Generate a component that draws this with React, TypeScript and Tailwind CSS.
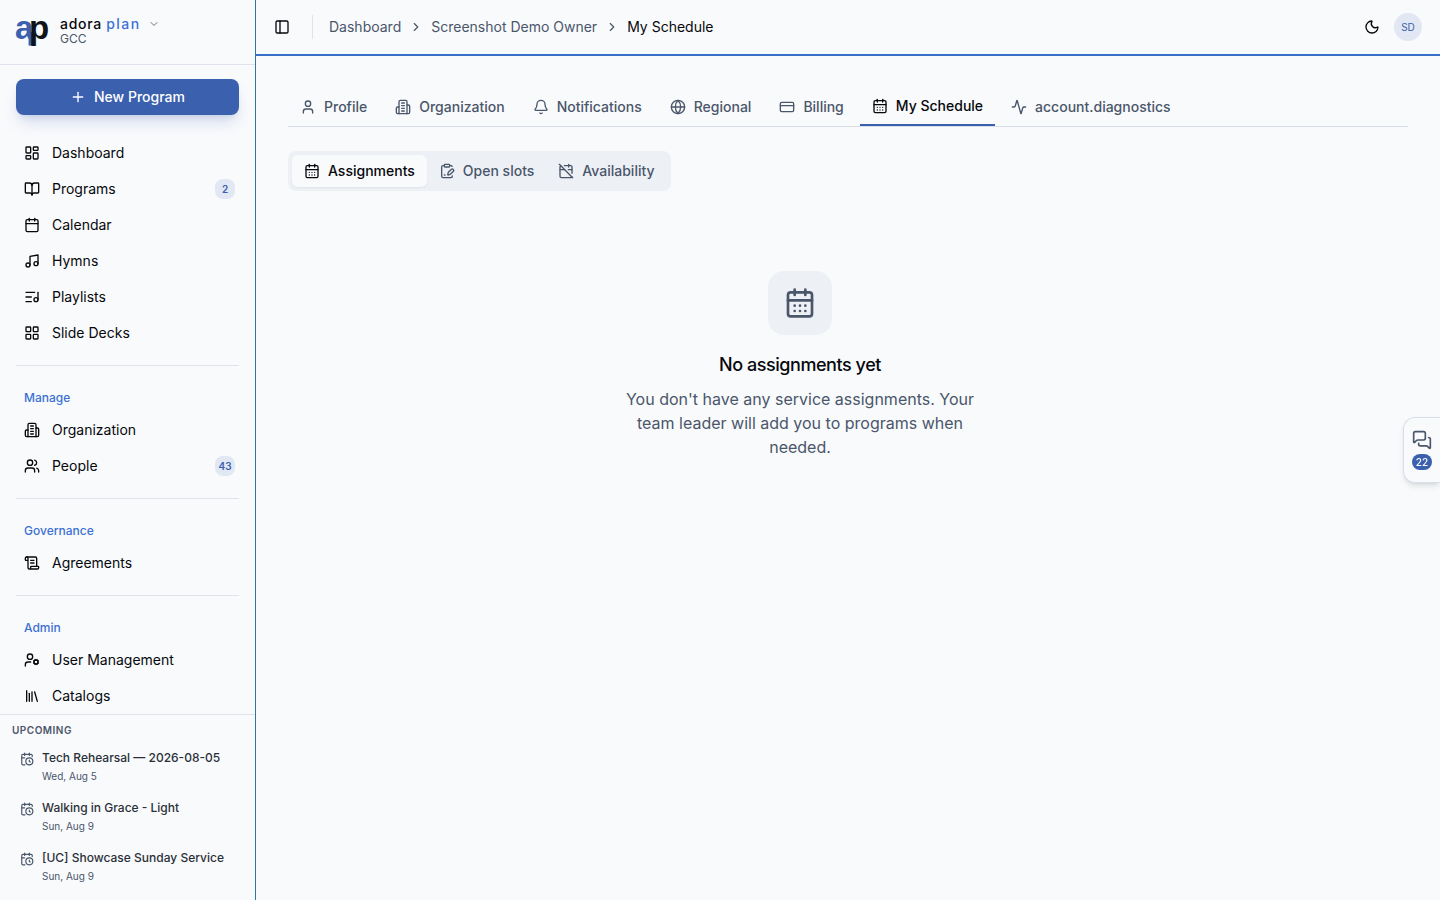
import { useState } from 'react';
import {
  Activity,
  Bell,
  BookOpen,
  Calendar,
  CalendarClock,
  CalendarDays,
  CalendarOff,
  ChevronDown,
  ChevronRight,
  ClipboardPenLine,
  CreditCard,
  Globe,
  LayoutDashboard,
  LayoutGrid,
  Library,
  ListMusic,
  MessagesSquare,
  Moon,
  Music,
  PanelLeft,
  Plus,
  ScrollText,
  User,
  UserCog,
  Users,
} from 'lucide-react';
import type { ComponentType } from 'react';

interface NavItem {
  label: string;
  icon: ComponentType<{ className?: string }>;
  count?: number;
}

interface NavGroup {
  title?: string;
  items: NavItem[];
}

function OfficeIcon({ className }: { className?: string }) {
  return (
    <svg
      className={className}
      viewBox="0 0 24 24"
      fill="none"
      stroke="currentColor"
      strokeWidth="2"
      strokeLinecap="round"
      strokeLinejoin="round"
      aria-hidden="true"
    >
      <path d="M6 22V4a2 2 0 0 1 2-2h8a2 2 0 0 1 2 2v18Z" />
      <path d="M6 12H4a2 2 0 0 0-2 2v6a2 2 0 0 0 2 2h2" />
      <path d="M18 9h2a2 2 0 0 1 2 2v9a2 2 0 0 1-2 2h-2" />
      <path d="M10 6h4" />
      <path d="M10 10h4" />
      <path d="M10 14h4" />
      <path d="M10 18h4" />
    </svg>
  );
}

const navGroups: NavGroup[] = [
  {
    items: [
      { label: 'Dashboard', icon: LayoutDashboard },
      { label: 'Programs', icon: BookOpen, count: 2 },
      { label: 'Calendar', icon: Calendar },
      { label: 'Hymns', icon: Music },
      { label: 'Playlists', icon: ListMusic },
      { label: 'Slide Decks', icon: LayoutGrid },
    ],
  },
  {
    title: 'Manage',
    items: [
      { label: 'Organization', icon: OfficeIcon },
      { label: 'People', icon: Users, count: 43 },
    ],
  },
  {
    title: 'Governance',
    items: [{ label: 'Agreements', icon: ScrollText }],
  },
  {
    title: 'Admin',
    items: [
      { label: 'User Management', icon: UserCog },
      { label: 'Catalogs', icon: Library },
    ],
  },
];

const upcoming = [
  { title: 'Tech Rehearsal — 2026-08-05', date: 'Wed, Aug 5' },
  { title: 'Walking in Grace - Light', date: 'Sun, Aug 9' },
  { title: '[UC] Showcase Sunday Service', date: 'Sun, Aug 9' },
];

const accountTabs: NavItem[] = [
  { label: 'Profile', icon: User },
  { label: 'Organization', icon: OfficeIcon },
  { label: 'Notifications', icon: Bell },
  { label: 'Regional', icon: Globe },
  { label: 'Billing', icon: CreditCard },
  { label: 'My Schedule', icon: CalendarDays },
  { label: 'account.diagnostics', icon: Activity },
];

const scheduleTabs: NavItem[] = [
  { label: 'Assignments', icon: CalendarDays },
  { label: 'Open slots', icon: ClipboardPenLine },
  { label: 'Availability', icon: CalendarOff },
];

function Logo() {
  return (
    <svg
      className="size-8 shrink-0 overflow-visible font-['Liberation_Sans',sans-serif] text-[33px] font-bold"
      viewBox="0 0 32 32"
      role="img"
      aria-label="adora plan"
    >
      <rect x="12.6" y="16" width="4" height="13.6" fill="#3a60ae" />
      <text y="22.6">
        <tspan x="-1" fill="#3a60ae">
          a
        </tspan>
        <tspan x="13" fill="#101418">
          p
        </tspan>
      </text>
    </svg>
  );
}

function Sidebar() {
  return (
    <aside className="flex w-64 shrink-0 flex-col border-r border-[#2b7a9c]">
      <div className="flex h-[65px] shrink-0 items-center border-b border-[#dfe4ec] px-4">
        <button type="button" className="flex items-center gap-3 text-left">
          <Logo />
          <span className="flex flex-col pb-0.5">
            <span className="flex items-center gap-2 text-sm leading-4 font-medium tracking-wider">
              <span>
                adora <span className="tracking-widest text-[#3b70d4]">plan</span>
              </span>
              <ChevronDown className="size-3 text-[#6b7688]" />
            </span>
            <span className="text-xs leading-[14px] text-[#4a566a]">GCC</span>
          </span>
        </button>
      </div>

      <div className="flex min-h-0 flex-1 flex-col overflow-hidden px-4 pt-[14px]">
        <button
          type="button"
          className="mb-5 flex h-9 shrink-0 items-center justify-center gap-2 rounded-lg bg-[#3a60ae] text-sm font-medium text-white shadow-lg shadow-[#3a60ae]/20"
        >
          <Plus className="size-4" />
          New Program
        </button>

        <nav>
          {navGroups.map((group, index) => (
            <section
              key={index}
              className={index > 0 ? 'mt-[14px] border-t border-[#dfe3ea] pt-[14px]' : ''}
            >
              {group.title && (
                <h2 className="flex h-8 items-center px-2 pt-1 text-xs font-medium text-[#3b70d4]">
                  {group.title}
                </h2>
              )}
              <ul>
                {group.items.map((item) => (
                  <li key={item.label}>
                    <a href="#" className="flex h-9 items-center gap-3 pr-1 pl-2 text-sm">
                      <item.icon className="size-4 shrink-0" />
                      <span className="flex-1">{item.label}</span>
                      {item.count && (
                        <span className="flex h-5 min-w-5 items-center justify-center rounded-lg bg-[#e1e8f4] text-[10px] font-semibold text-[#3a60ae]">
                          {item.count}
                        </span>
                      )}
                    </a>
                  </li>
                ))}
              </ul>
            </section>
          ))}
        </nav>
      </div>

      <div className="shrink-0 border-t border-[#dfe3ea] px-3 pt-[7px] pb-1.5">
        <h2 className="text-[10px] leading-4 font-semibold tracking-wider text-[#4a566a]">UPCOMING</h2>
        <ul className="pt-1.5">
          {upcoming.map((event) => (
            <li key={event.title}>
              <a href="#" className="flex h-[50px] gap-2 px-2 pt-1">
                <CalendarClock className="mt-1 size-[14px] shrink-0 text-[#4a566a]" />
                <span className="flex min-w-0 flex-col">
                  <span className="truncate text-xs leading-5 font-medium text-[#2b3038]">{event.title}</span>
                  <span className="text-[10px] leading-4 text-[#4a566a]">{event.date}</span>
                </span>
              </a>
            </li>
          ))}
        </ul>
      </div>
    </aside>
  );
}

function Header() {
  return (
    <header className="flex h-14 shrink-0 items-center border-b-2 border-[#3b70c8] px-[18px]">
      <button type="button" aria-label="Toggle sidebar">
        <PanelLeft className="size-4" />
      </button>
      <div className="mr-4 ml-[22px] h-6 w-px bg-[#dfe3ea]" />
      <nav aria-label="Breadcrumb">
        <ol className="flex items-center gap-2 text-sm text-[#4a566a]">
          <li>
            <a href="#">Dashboard</a>
          </li>
          <li aria-hidden="true">
            <ChevronRight className="size-[14px]" />
          </li>
          <li>
            <a href="#">Screenshot Demo Owner</a>
          </li>
          <li aria-hidden="true">
            <ChevronRight className="size-[14px]" />
          </li>
          <li className="text-[#06080c]">My Schedule</li>
        </ol>
      </nav>
      <div className="ml-auto flex items-center gap-[14px]">
        <button type="button" aria-label="Toggle theme">
          <Moon className="size-4" />
        </button>
        <button
          type="button"
          className="flex size-7 items-center justify-center rounded-full bg-[#e1e8f3] text-[10px] text-[#3a60ae]"
        >
          SD
        </button>
      </div>
    </header>
  );
}

export default function App() {
  const [accountTab, setAccountTab] = useState('My Schedule');
  const [scheduleTab, setScheduleTab] = useState('Assignments');

  return (
    <div className="flex h-screen overflow-hidden bg-[#f9fafc] font-['Inter',sans-serif] text-[#06080c]">
      <Sidebar />

      <div className="flex min-w-0 flex-1 flex-col">
        <Header />

        <main className="flex-1 overflow-auto px-8 pt-8">
          <div className="flex gap-1 border-b border-[#d8dfe9]" role="tablist">
            {accountTabs.map((tab) => (
              <button
                key={tab.label}
                type="button"
                role="tab"
                aria-selected={accountTab === tab.label}
                onClick={() => setAccountTab(tab.label)}
                className={`flex h-[38px] items-center gap-2 px-3 text-sm font-medium ${
                  accountTab === tab.label ? 'border-b-2 border-[#3a60ae]' : 'text-[#4a566a]'
                }`}
              >
                <tab.icon className="size-4" />
                {tab.label}
              </button>
            ))}
          </div>

          <div className="max-w-5xl pt-6">
            <div className="inline-flex rounded-lg bg-[#edf1f6] p-1" role="tablist">
              {scheduleTabs.map((tab) => (
                <button
                  key={tab.label}
                  type="button"
                  role="tab"
                  aria-selected={scheduleTab === tab.label}
                  onClick={() => setScheduleTab(tab.label)}
                  className={`flex h-8 items-center gap-2 rounded-md px-3 text-sm font-medium ${
                    scheduleTab === tab.label ? 'bg-[#f9fafc] shadow-xs' : 'text-[#4a566a]'
                  }`}
                >
                  <tab.icon className="size-4" />
                  {tab.label}
                </button>
              ))}
            </div>

            {/* Empty state */}
            <div className="flex flex-col items-center pt-20 text-center">
              <div className="flex size-16 items-center justify-center rounded-2xl bg-[#edf1f6] text-[#4a566a]">
                <CalendarDays className="size-8" />
              </div>
              <h3 className="mt-4 text-lg font-medium tracking-tight">No assignments yet</h3>
              <p className="mt-2 max-w-sm text-base text-[#4a566a]">
                You don't have any service assignments. Your team leader will add you to programs when
                needed.
              </p>
            </div>
          </div>
        </main>
      </div>

      {/* Chat launcher */}
      <button
        type="button"
        aria-label="Open messages"
        className="fixed top-1/2 right-0 flex -translate-y-1/2 flex-col items-center gap-1 rounded-l-xl border border-r-0 border-[#d8dfe9] bg-[#f9fafc] px-2 py-3 text-[#4a566a] shadow-md"
      >
        <MessagesSquare className="size-5" />
        <span className="flex h-4 min-w-5 items-center justify-center rounded-full bg-[#3a60ae] text-[10px] font-medium text-white">
          22
        </span>
      </button>
    </div>
  );
}
